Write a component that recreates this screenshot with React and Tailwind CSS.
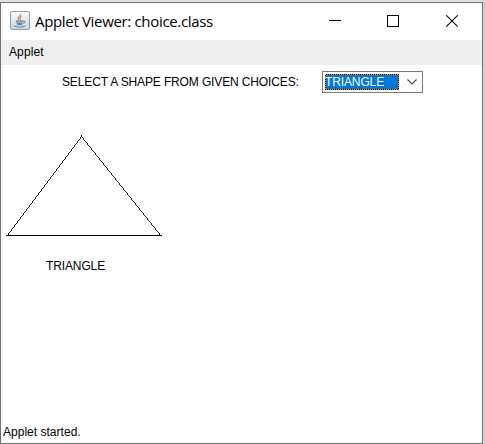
function JavaIcon() {
  return (
    <svg width="20" height="19" viewBox="0 0 20 19" fill="none" className="shrink-0">
      <defs>
        <linearGradient id="tile" x1="0" y1="0" x2="0" y2="1">
          <stop offset="0" stopColor="#fbfcfd" />
          <stop offset="1" stopColor="#cbd5dd" />
        </linearGradient>
      </defs>
      <rect x="0.5" y="0.5" width="19" height="18" rx="1.5" fill="url(#tile)" stroke="#8fa0ae" />
      <path d="M10.6 3c.6 1.800-2.600 2.600-2.400 4.200.1.800.8 1.200 1 1.900M11.600 5.400c-1.400.7-2 1.400-1.300 2.300.4.600.3 1-.2 1.500" stroke="#e58a4c" strokeWidth="1.300" />
      <path d="M5.800 10.200h7.200M6.400 11.800c1.800.6 4.400.6 6.300 0M7 13.300c1.500.5 3.800.5 5.200 0" stroke="#557f9f" strokeWidth="1.200" />
      <path d="M13 10.200c2.600-.6 2.600 1.700-.2 2.300M4.500 14.500c-.8 1.900 8.600 2 10.500.1" stroke="#6c91ad" strokeWidth="1.100" />
    </svg>
  );
}

function TitleBar() {
  return (
    <header className="flex h-[37px] shrink-0 items-center pb-[2px] pl-[9px]">
      <JavaIcon />
      <h1 className="ml-[5px] grow whitespace-nowrap pt-px font-['Open_Sans',sans-serif] text-[15px] leading-[20px] tracking-[-0.33px]">
        Applet Viewer: choice.class
      </h1>
      <div className="flex shrink-0 items-center pt-px pr-[24px]">
        <svg width="12" height="13" shapeRendering="crispEdges"><path d="M0 5.500h12" stroke="#000" /></svg>
        <svg width="12" height="13" className="ml-[46px]" shapeRendering="crispEdges"><rect x=".5" y=".5" width="11" height="11" fill="none" stroke="#000" /></svg>
        <svg width="12" height="13" className="ml-[47px]"><path d="M.3.300l11.400 11.400M11.700.300L.3 11.700" stroke="#000" strokeWidth="1.100" /></svg>
      </div>
    </header>
  );
}

export default function App() {
  return (
    <div className="h-[444px] w-[485px] overflow-hidden bg-linear-to-r from-[#e2e2e2] from-[99%] to-[#cbcfcf] pt-[2px] font-['Liberation_Sans',Arial,sans-serif] text-[12px] leading-[14px] text-black">
      <div className="flex h-[442px] w-[483px] flex-col border border-[#707070] bg-white">
        <TitleBar />
        <nav className="flex h-[25px] shrink-0 items-center bg-[#efefef] pb-[2px] pl-[8px]">
          <span className="tracking-[0.1px]">Applet</span>
        </nav>
        <main className="flex grow flex-col">
          <div className="flex h-[34px] items-center pl-[61px]">
            <span className="w-[260px] whitespace-nowrap tracking-[-0.13px]">SELECT A SHAPE FROM GIVEN CHOICES:</span>
            <div className="flex h-[22px] w-[101px] items-center border border-[#7a7a7a] bg-white pl-[2px]">
              <div className="h-[16px] w-[74px] bg-[conic-gradient(#000_25%,#ff8728_0_50%,#000_0_75%,#ff8728_0)] bg-[length:2px_2px] p-px">
                <div className="h-[14px] bg-[#0078d7] tracking-[-0.12px] text-white">
                  <span className="-ml-px">TRIANGLE</span>
                </div>
              </div>
              <svg width="10" height="6" className="ml-[8px]" fill="none"><path d="M.5.500L5 5 9.500.500" stroke="#444" strokeWidth="1.100" /></svg>
            </div>
          </div>
          <svg width="156" height="102" className="mt-[36px] ml-[5px]" shapeRendering="crispEdges" fill="none" stroke="#000">
            <path d="M.5 100.500L75.500.500L155.500 100.500" strokeWidth="0.85" />
            <path d="M75 .500h1M0 100.500H156" />
          </svg>
          <div className="mt-[22px] pl-[45px] tracking-[-0.12px]">TRIANGLE</div>
          <footer className="mt-auto pb-[4px] pl-[2px] tracking-[0.02px]">Applet started.</footer>
        </main>
      </div>
    </div>
  );
}
